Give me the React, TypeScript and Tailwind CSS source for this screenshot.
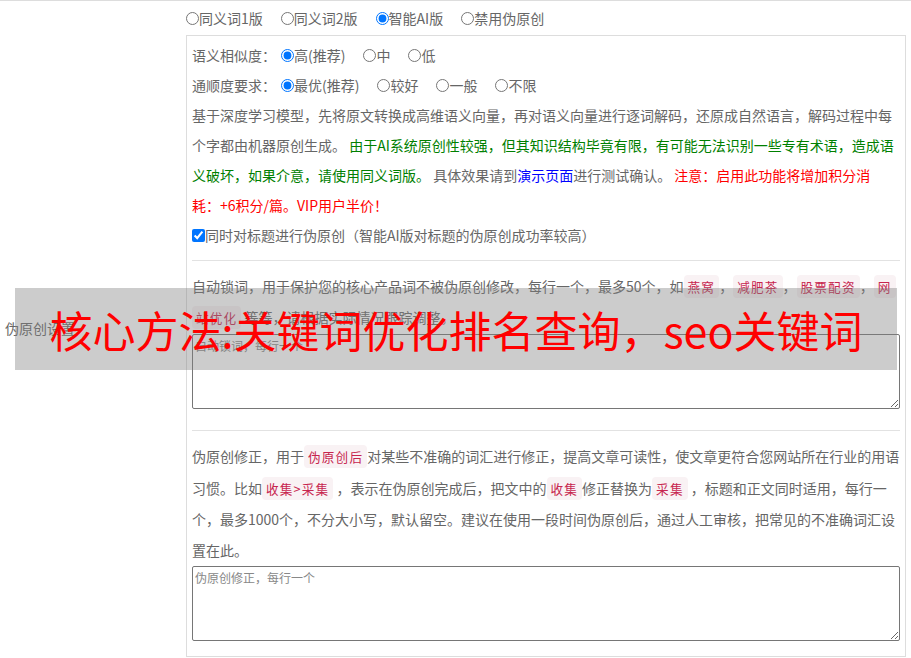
const font = "font-['Microsoft_YaHei','Noto_Sans_CJK_SC',sans-serif]";

const Code = ({ children }: { children: React.ReactNode }) => (
  <code className="rounded-[4px] bg-[#f9f2f4] px-[4px] py-[2px] text-[12.6px] tracking-[1.2px] text-[#c7254e] [font-family:inherit] [box-decoration-break:clone]">
    {children}
  </code>
);

const Radio = ({
  name,
  label,
  checked,
}: {
  name: string;
  label: string;
  checked?: boolean;
}) => (
  <label className="mr-[18px] inline-flex items-center">
    <input type="radio" name={name} defaultChecked={checked} className="m-0 h-[13px] w-[13px]" />
    <span>{label}</span>
  </label>
);

const App = () => {
  return (
    <div className={`${font} relative min-h-screen bg-white text-[14px] text-[#666]`}>
      <div className="flex border-t border-[#ddd]">
        {/* left label cell */}
        <div className="flex w-[186px] shrink-0 items-center pl-[5px]">
          <span>伪原创设置</span>
        </div>

        {/* right cell */}
        <div className="w-[720px] shrink-0">
          <div className="flex h-[34px] items-center">
            <Radio name="mode" label="同义词1版" />
            <Radio name="mode" label="同义词2版" />
            <Radio name="mode" label="智能AI版" checked />
            <Radio name="mode" label="禁用伪原创" />
          </div>

          <div className="border border-[#ddd] pt-[4px] pr-[4px] pb-[15px] pl-[5px]">
            <div className="flex h-[30px] items-center">
              <span>语义相似度：</span>
              <span className="ml-[5px] flex items-center">
                <Radio name="sim" label="高(推荐)" checked />
                <Radio name="sim" label="中" />
                <Radio name="sim" label="低" />
              </span>
            </div>
            <div className="flex h-[30px] items-center">
              <span>通顺度要求：</span>
              <span className="ml-[5px] flex items-center">
                <Radio name="flu" label="最优(推荐)" checked />
                <Radio name="flu" label="较好" />
                <Radio name="flu" label="一般" />
                <Radio name="flu" label="不限" />
              </span>
            </div>
            <p className="leading-[30px]">
              基于深度学习模型，先将原文转换成高维语义向量，再对语义向量进行逐词解码，还原成自然语言，解码过程中每个字都由机器原创生成。{" "}
              <span className="text-[#008000]">
                由于AI系统原创性较强，但其知识结构毕竟有限，有可能无法识别一些专有术语，造成语义破坏，如果介意，请使用同义词版。
              </span>{" "}
              具体效果请到<a className="text-[#0000ff]">演示页面</a>进行测试确认。{" "}
              <span className="text-[#ff0000]">
                注意：启用此功能将增加积分消<span className="whitespace-nowrap">耗：+6积分</span>/篇。VIP用户半价！
              </span>
            </p>
            <label className="flex h-[30px] items-center">
              <input type="checkbox" defaultChecked className="m-0 h-[13px] w-[13px]" />
              <span>同时对标题进行伪原创（智能AI版对标题的伪原创成功率较高）</span>
            </label>

            <div className="mt-[10px] mr-[1px] border-t border-[#e2e2e2] pt-[10px]">
              <p className="leading-[30px]">
                自动锁词，用于保护您的核心产品词不被伪原创修改，每行一个，最多50个，如<Code>燕窝</Code>，<Code>减肥茶</Code>，<Code>股票配资</Code>，<Code>网站优化</Code> 等等，请根据实际情况跟踪调整。
              </p>
              <textarea
                placeholder="自动锁词，每行一个"
                className="mt-[1px] block h-[75px] w-[708px] rounded-[2px] border border-[#767676] px-[2px] py-[2px] text-[12px] leading-[18px] placeholder:text-[#888]"
              />
            </div>

            <div className="mt-[21px] mr-[1px] border-t border-[#e2e2e2] pt-[10px]">
              <p className="leading-[30.7px]">
                伪原创修正，用于<Code>伪原创后</Code>对某些不准确的词汇进行修正，提高文章可读性，使文章更符合您网站所在行业的用语习惯。比如<Code>收集&gt;采集</Code> ，表示在伪原创完成后，把文中的<Code>收集</Code>修正替换为<Code>采集</Code> ，标题和正文同时适用，每行一个，最多1000个，不分大小写，默认留空。建议在使用一段时间伪原创后，通过人工审核，把常见的不准确词汇设置在此。
              </p>
              <textarea
                placeholder="伪原创修正，每行一个"
                className="block h-[75px] w-[708px] rounded-[2px] border border-[#767676] px-[2px] py-[2px] text-[12px] leading-[18px] placeholder:text-[#888]"
              />
            </div>
          </div>
        </div>
      </div>

      {/* watermark banner over the content */}
      <div className="absolute top-[288px] left-[15px] flex h-[82px] w-[882px] items-center justify-center bg-[rgba(128,128,128,0.4)]">
        <span className="text-[43px] leading-none text-[#ff0000]">核心方法:关键词优化排名查询，seo关键词</span>
      </div>
    </div>
  );
};

export default App;
